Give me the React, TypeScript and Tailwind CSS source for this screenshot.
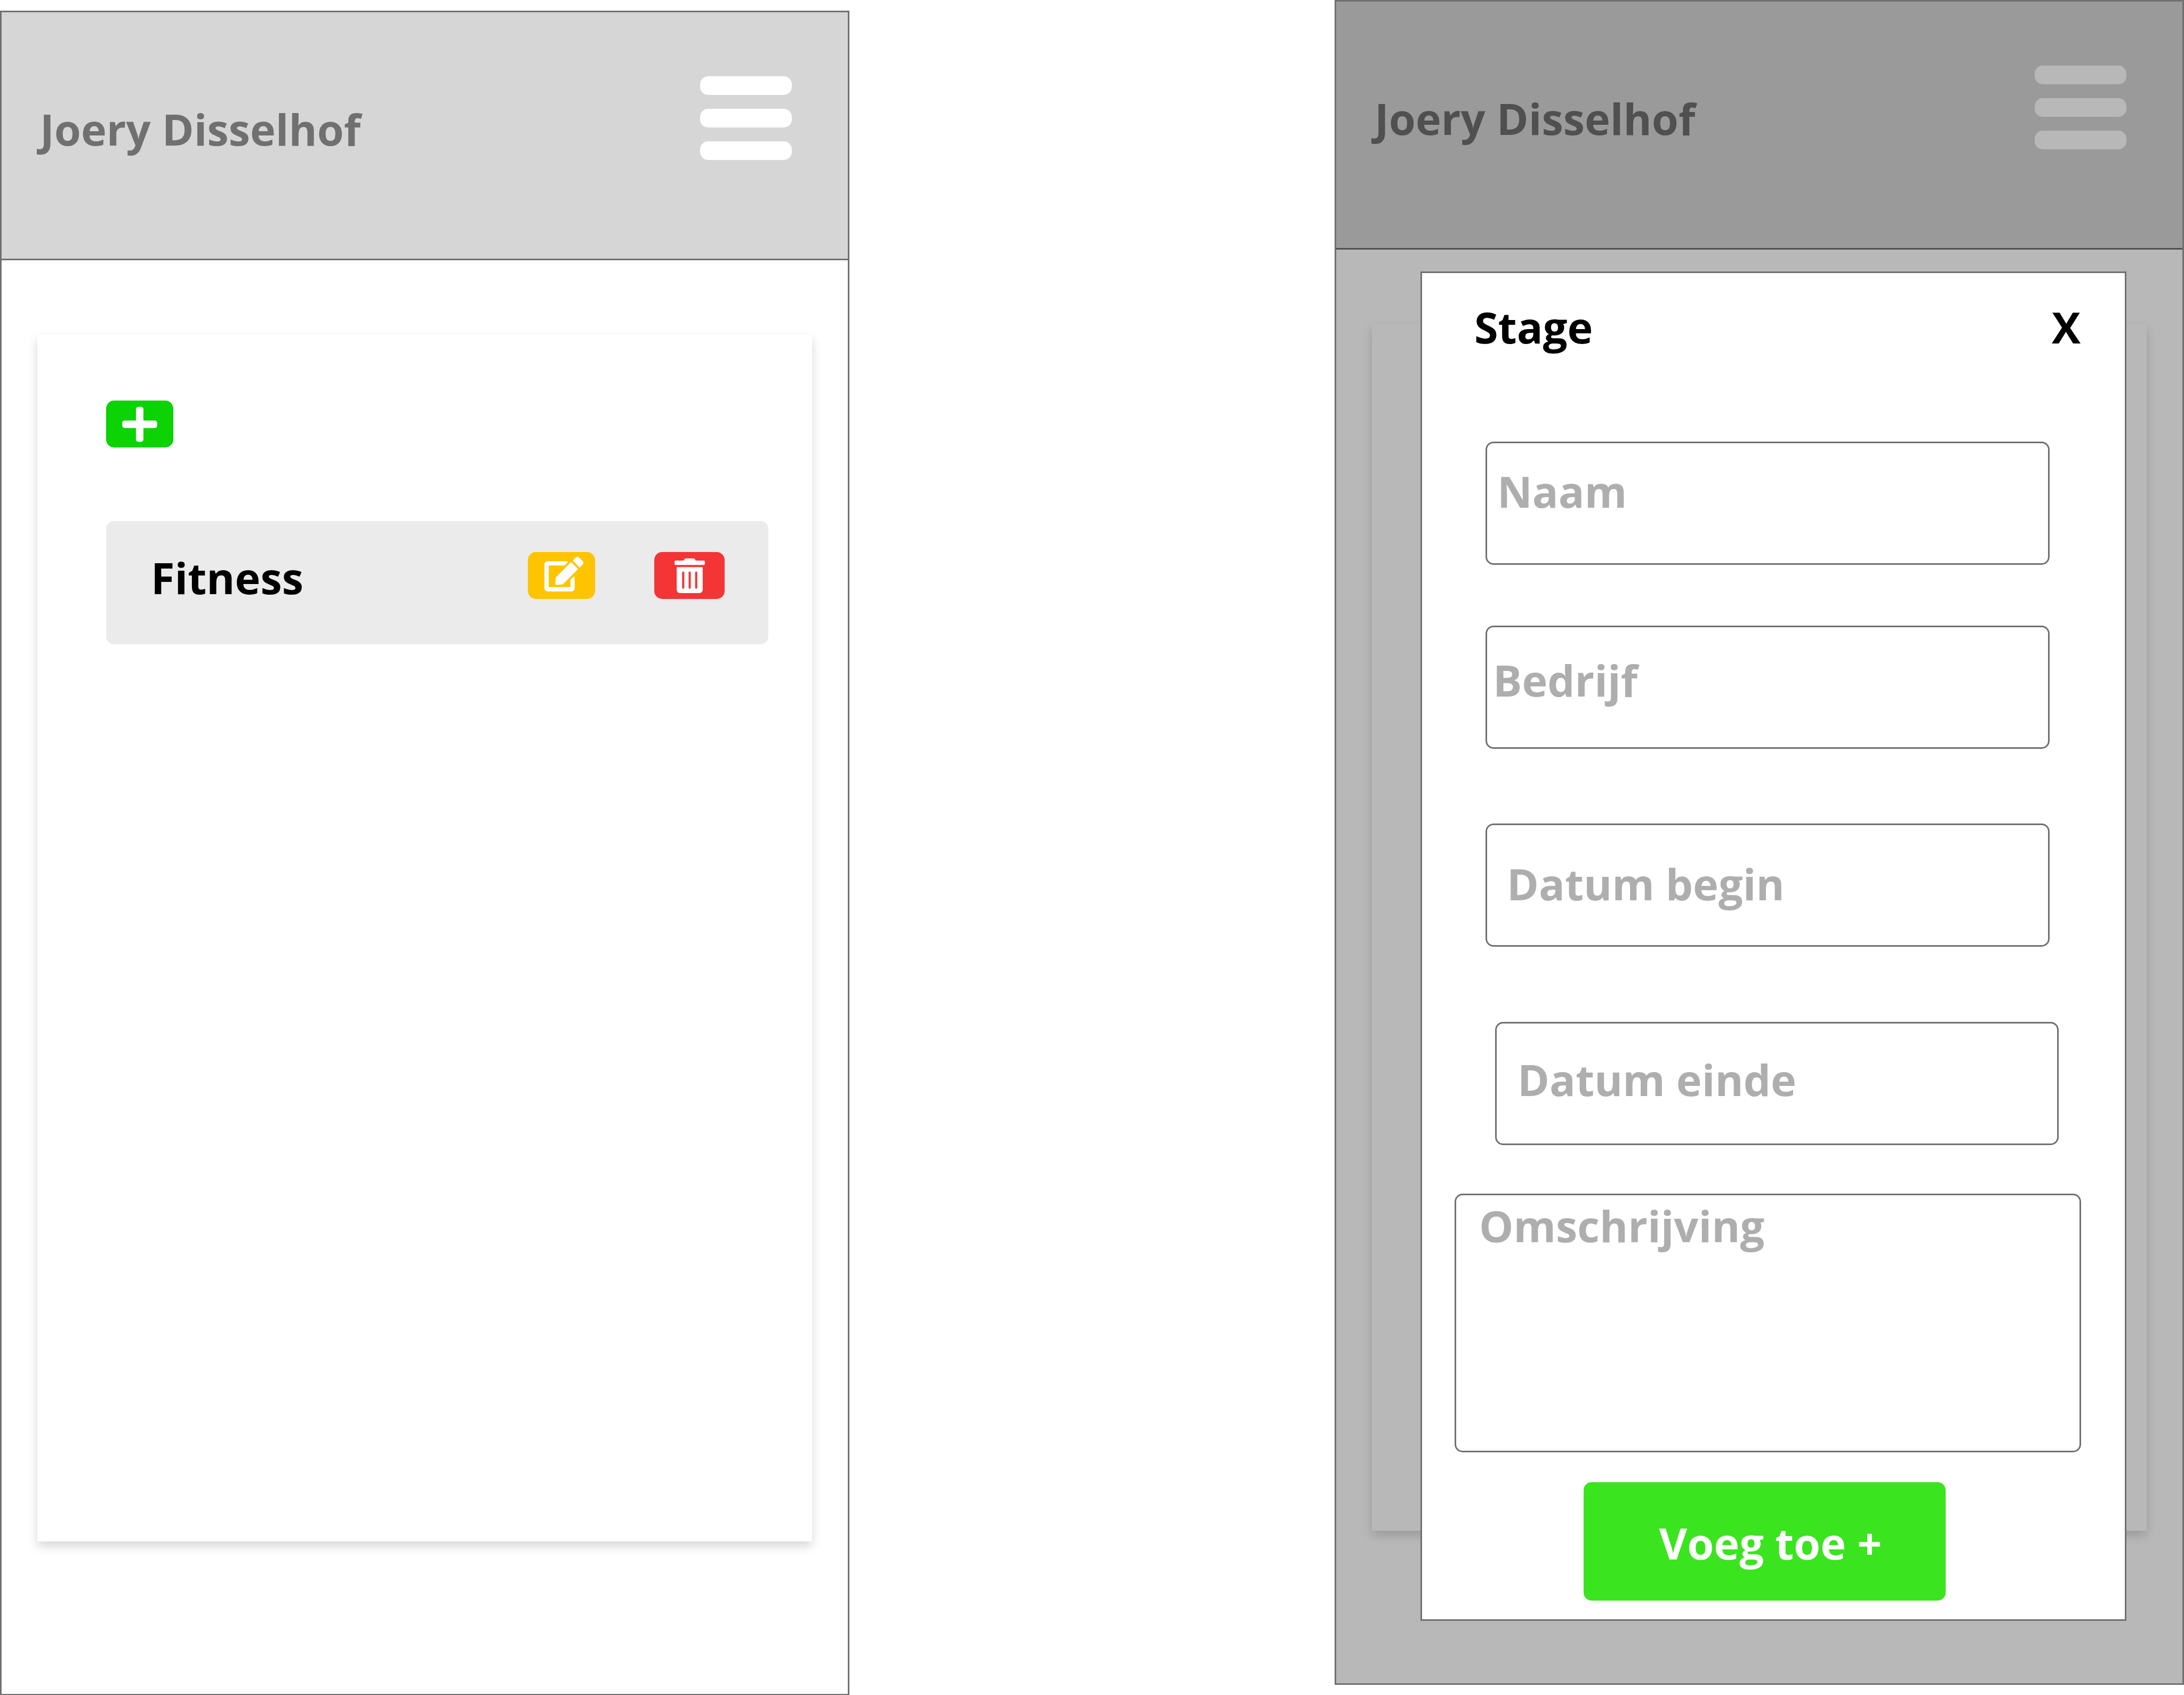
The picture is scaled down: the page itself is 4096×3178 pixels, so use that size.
import { FaEdit, FaPlus, FaTrashAlt } from "react-icons/fa";

function Header() {
  return (
    <header className="flex h-[465px] items-start justify-between border-b-3 border-[#707070] bg-[#d6d6d6] pr-[105px] pl-[72px]">
      <h1 className="pt-[164px] text-[#707070]">Joery Disselhof</h1>
      <button type="button" aria-label="Menu" className="mt-[120px] flex w-[172px] flex-col gap-[26px]">
        <span className="h-[35px] rounded-[15px] bg-white" />
        <span className="h-[35px] rounded-[15px] bg-white" />
        <span className="h-[35px] rounded-[15px] bg-white" />
      </button>
    </header>
  );
}

function ListScreen() {
  return (
    <section className="mt-[20px] flex flex-col border-3 border-[#707070] bg-white">
      <Header />
      <div className="flex flex-1 flex-col px-[67px] pt-[140px] pb-[286px]">
        <div className="flex-1 bg-white pt-[123px] pr-[82px] pl-[129px] shadow-[0_9px_18px_rgba(0,0,0,0.16)]">
          <button
            type="button"
            aria-label="Toevoegen"
            className="flex h-[88px] w-[126px] items-center justify-center rounded-[15px] bg-[#0bd304] text-white"
          >
            <FaPlus className="h-[75px] w-[66px]" />
          </button>
          <ul className="mt-[138px]">
            <li className="flex h-[231px] items-start rounded-[15px] bg-[#ebebeb] pr-[82px] pl-[84px]">
              <span className="flex-1 pt-[51px]">Fitness</span>
              <div className="flex gap-[111px] pt-[58px] text-white">
                <button
                  type="button"
                  aria-label="Bewerken"
                  className="flex h-[88px] w-[126px] items-center justify-center rounded-[15px] bg-[#ffc400] pb-[6px] pl-[8px]"
                >
                  <FaEdit className="h-[65px] w-[73px]" />
                </button>
                <button
                  type="button"
                  aria-label="Verwijderen"
                  className="flex h-[88px] w-[132px] items-center justify-center rounded-[15px] bg-[#f33535]"
                >
                  <FaTrashAlt className="h-[65px] w-[57px]" />
                </button>
              </div>
            </li>
          </ul>
        </div>
      </div>
    </section>
  );
}

const field =
  "block h-[231px] min-w-0 rounded-[15px] border-3 border-[#707070] bg-white placeholder:text-[#aeaeae] placeholder:opacity-100";

function StageForm() {
  return (
    <form className="col-start-1 row-start-1 mt-[506px] mr-[105px] mb-[117px] ml-[158px] flex min-w-0 flex-col border-3 border-[#707070] bg-white pb-[35px]">
      <div className="flex justify-between pt-[46px] pr-[83px] pl-[98px]">
        <h2>Stage</h2>
        <button type="button" aria-label="Sluiten">
          X
        </button>
      </div>
      <div className="mt-[160px] mr-[141px] ml-[119px] flex flex-col">
        <input aria-label="Naam" placeholder="Naam" className={`${field} pb-[46px] pl-[19px]`} />
        <input aria-label="Bedrijf" placeholder="Bedrijf" className={`${field} mt-[114px] pb-[29px] pl-[11px]`} />
        <input
          aria-label="Datum begin"
          placeholder="Datum begin"
          className={`${field} mt-[140px] pb-[6px] pl-[37px]`}
        />
      </div>
      <div className="mt-[141px] mr-[124px] ml-[137px] flex flex-col">
        <input aria-label="Datum einde" placeholder="Datum einde" className={`${field} pb-[16px] pl-[39px]`} />
      </div>
      <textarea
        aria-label="Omschrijving"
        placeholder="Omschrijving"
        className="mt-[91px] mr-[82px] ml-[61px] block h-[485px] min-w-0 resize-none rounded-[15px] border-3 border-[#707070] bg-white pt-[2px] pl-[43px] placeholder:text-[#aeaeae] placeholder:opacity-100"
      />
      <button
        type="submit"
        className="mt-[56px] mr-[336px] ml-[303px] h-[222px] rounded-[15px] bg-[#3ae41e] pt-[6px] pl-[22px] text-white"
      >
        Voeg toe +
      </button>
    </form>
  );
}

function DialogScreen() {
  return (
    <section className="mb-[20px] grid grid-cols-1 border-3 border-[#707070] bg-white">
      <div className="col-start-1 row-start-1 flex flex-col">
        <Header />
        <div className="flex flex-1 flex-col px-[67px] pt-[140px] pb-[286px]">
          <div className="flex-1 bg-white shadow-[0_9px_18px_rgba(0,0,0,0.16)]" />
        </div>
      </div>
      <div className="col-start-1 row-start-1 bg-black/28" />
      <StageForm />
    </section>
  );
}

export default function App() {
  return (
    <main className="grid min-h-screen grid-cols-2 gap-x-[910px] bg-white font-['Open_Sans','Noto_Sans',sans-serif] text-[81px] leading-[110px] font-bold text-black">
      <ListScreen />
      <DialogScreen />
    </main>
  );
}
